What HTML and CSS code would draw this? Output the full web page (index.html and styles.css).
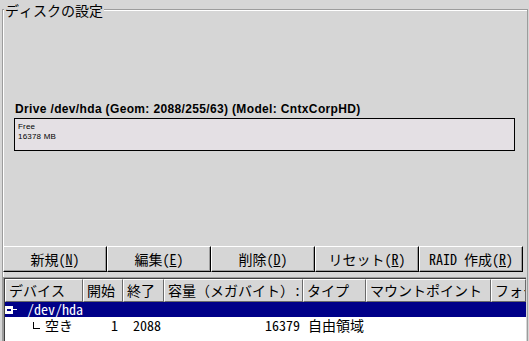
FILE: index.html
```html
<!DOCTYPE html>
<html lang="ja">
<head>
<meta charset="utf-8">
<title>ディスクの設定</title>
<link rel="stylesheet" href="styles.css">
</head>
<body>
<div class="frame">
  <div class="legend">ディスクの設定</div>
  <div class="drive">
    <div class="drive-title">Drive /dev/hda (Geom: 2088/255/63) (Model: CntxCorpHD)</div>
    <div class="disk-bar">
      <div class="seg">
        <div>Free</div>
        <div>16378 MB</div>
      </div>
    </div>
  </div>
  <div class="buttons">
    <button class="btn">新規(<u>N</u>)</button>
    <button class="btn">編集(<u>E</u>)</button>
    <button class="btn">削除(<u>D</u>)</button>
    <button class="btn">リセット(<u>R</u>)</button>
    <button class="btn">RAID 作成(<u>R</u>)</button>
  </div>
  <div class="list">
    <div class="cols header">
      <div class="hcell">デバイス</div>
      <div class="hcell">開始</div>
      <div class="hcell">終了</div>
      <div class="hcell">容量（メガバイト）:</div>
      <div class="hcell">タイプ</div>
      <div class="hcell">マウントポイント</div>
      <div class="hcell">フォーマット</div>
    </div>
    <div class="row-selected">
      <span class="exp"><span class="minus"></span></span>
      <span class="dash"></span>
      <span class="dev">/dev/hda</span>
    </div>
    <div class="cols row">
      <div class="cell tree"><span class="branch"></span><span class="leaf">空き</span></div>
      <div class="cell num c-start">1</div>
      <div class="cell num c-end">2088</div>
      <div class="cell num c-size">16379</div>
      <div class="cell c-type">自由領域</div>
      <div class="cell"></div>
      <div class="cell"></div>
    </div>
  </div>
</div>
</body>
</html>
```

FILE: styles.css
```css
* {
  box-sizing: border-box;
}

html, body {
  margin: 0;
  padding: 0;
}

body {
  width: 529px;
  height: 341px;
  overflow: hidden;
  background: #d6d6d6;
  color: #000;
  font-family: "Noto Sans Mono CJK JP", "Noto Sans CJK JP", sans-serif;
}

.frame {
  margin: 9px 1px 0 2px;
  height: 340px;
  border: 1px solid #9c9c9c;
  border-bottom: 0;
  box-shadow: inset 1px 1px 0 #fff;
}

.legend {
  display: block;
  width: max-content;
  margin: -8px 0 0 1px;
  padding: 0 1px;
  background: #d6d6d6;
  font-size: 14px;
  line-height: 16px;
}

.drive {
  margin: 84px 0 0 11px;
}

.drive-title {
  font: bold 12px/14px "Liberation Sans", Arial, sans-serif;
  letter-spacing: 0.35px;
  padding-left: 1px;
  margin-bottom: 2px;
  white-space: nowrap;
}

.disk-bar {
  width: 501px;
  height: 33px;
  border: 1px solid #000;
  background: #e4e0e4;
  padding: 3px 0 0 3px;
  font: 8px/10px "Liberation Sans", Arial, sans-serif;
  letter-spacing: 0.2px;
}

.buttons {
  display: flex;
  margin-top: 95px;
}

.btn {
  width: 104px;
  height: 26px;
  margin: 0;
  padding: 0;
  background: #d6d6d6;
  border: 1px solid;
  border-color: #fff #000 #000 #fff;
  box-shadow: inset -1px -1px 0 #9c9c9c;
  color: #000;
  font-family: "Noto Sans Mono CJK JP", "Noto Sans CJK JP", sans-serif;
  font-size: 14px;
  line-height: 16px;
  white-space: nowrap;
}

.btn u {
  text-underline-offset: 1px;
}

.list {
  margin: 5px 1px 0 0;
  height: 70px;
  background: #fff;
  border-top: 1px solid #9c9c9c;
  border-left: 1px solid #9c9c9c;
  box-shadow: inset 1px 1px 0 #404040;
  padding: 1px 0 0 1px;
  overflow: hidden;
}

.cols {
  display: grid;
  grid-template-columns: 78px 40px 41px 139px 63px 125px 1fr;
}

.header {
  height: 23px;
}

.hcell {
  background: #d6d6d6;
  border: 1px solid;
  border-color: #fff #6a6a6a #6a6a6a #fff;
  padding-left: 3px;
  font-size: 14px;
  line-height: 20px;
  white-space: nowrap;
  overflow: hidden;
}

.row-selected {
  height: 15px;
  background: #000088;
  color: #fff;
  display: flex;
  align-items: center;
  font-size: 14px;
  line-height: 15px;
}

.exp {
  width: 8px;
  height: 8px;
  background: #fff;
  display: flex;
  align-items: center;
  justify-content: center;
}

.minus {
  width: 4px;
  height: 2px;
  background: #000088;
}

.dash {
  width: 4px;
  height: 1px;
  background: #fff;
}

.dev {
  margin-left: 10px;
}

.row {
  height: 17px;
}

.cell {
  font-size: 14px;
  line-height: 17px;
  white-space: nowrap;
}

.tree {
  display: flex;
  align-items: center;
  padding-left: 28px;
}

.branch {
  width: 7px;
  height: 7px;
  border-left: 1px solid #000;
  border-bottom: 1px solid #000;
  margin-right: 5px;
}

.leaf {
  line-height: 17px;
}

.num {
  text-align: right;
}

.c-start {
  padding-right: 5px;
}

.c-end {
  padding-right: 3px;
}

.c-size {
  padding-right: 3px;
}

.c-type {
  padding-left: 5px;
}
```
